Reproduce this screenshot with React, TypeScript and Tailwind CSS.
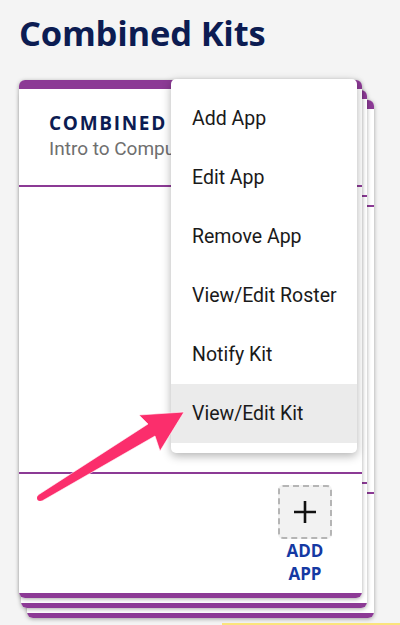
import React from "react";

function BackCard({ cls }: { cls: string }) {
  return (
    <div className={`absolute h-[518px] flex flex-col bg-white rounded-[6px] shadow-[0_1px_4px_rgba(0,0,0,0.35)] overflow-hidden ${cls}`}>
      <div className="h-[9px] bg-[#8c3a95]" />
      <div className="h-[96px]" />
      <div className="h-[2px] bg-[#8c3a95]" />
      <div className="h-[285px]" />
      <div className="h-[2px] bg-[#8c3a95]" />
      <div className="flex-1" />
      <div className="h-[5px] bg-[#8c3a95]" />
    </div>
  );
}

const items = ["Add App", "Edit App", "Remove App", "View/Edit Roster", "Notify Kit", "View/Edit Kit"];

export default function App() {
  return (
    <div className="relative w-[400px] h-[625px] overflow-hidden bg-[#f4f4f4]" style={{ fontFamily: "Roboto, 'Open Sans', sans-serif" }}>
      <h1 className="pl-[19px] pt-[12px] h-[80px] text-[34.5px] leading-[42px] font-bold text-[#0c1c52] tracking-[-0.2px]" style={{ fontFamily: "'Open Sans', sans-serif" }}>
        Combined Kits
      </h1>
      <div className="relative ml-[19px] w-[343px] h-[518px]">
        <BackCard cls="left-[8px] top-[20px] w-[347px]" />
        <BackCard cls="left-[2px] top-[10px] w-[346px]" />
        <div className="relative h-[518px] flex flex-col bg-white rounded-[6px] shadow-[0_1px_4px_rgba(0,0,0,0.35)] overflow-hidden">
          <div className="h-[9px] bg-[#8c3a95]" />
          <div className="h-[96px] pl-[30px] pt-[22px]">
            <div className="text-[19px] leading-[24px] font-bold tracking-[1.7px] text-[#0c1c52]" style={{ fontFamily: "'Open Sans', sans-serif" }}>
              COMBINED
            </div>
            <div className="mt-[1px] text-[19px] leading-[26px] text-[#6f6f6f]">Intro to Computer Science</div>
          </div>
          <div className="h-[2px] bg-[#8c3a95]" />
          <div className="h-[285px]" />
          <div className="h-[2px] bg-[#8c3a95]" />
          <div className="flex-1 flex justify-end pr-[29px] pt-[11px]">
            <div className="flex flex-col items-center w-[56px]">
              <div className="w-[54px] h-[54px] rounded-[5px] border-2 border-dashed border-[#b5b5b5] bg-[#f2f2f2] flex items-center justify-center">
                <svg width="24" height="24" viewBox="0 0 24 24">
                  <path d="M12 1v22M1 12h22" stroke="#111" strokeWidth="2.6" />
                </svg>
              </div>
              <div className="mt-[0px] text-[17px] leading-[23px] font-bold text-[#1539a3] text-center" style={{ fontFamily: "'Open Sans', sans-serif" }}>
                ADD
                <br />
                APP
              </div>
            </div>
          </div>
          <div className="h-[5px] bg-[#8c3a95]" />
        </div>
        <div className="absolute left-[152px] top-[-1px] w-[186px] h-[374px] py-[10px] bg-white rounded-[5px] shadow-[0_3px_10px_rgba(0,0,0,0.3)]">
          {items.map((t, i) => (
            <div
              key={t}
              className={`h-[59px] flex items-center pl-[21px] text-[19.5px] text-[#1a1a1a] ${i === 5 ? "bg-[#ebebeb]" : ""}`}
            >
              {t}
            </div>
          ))}
        </div>
      </div>
      <svg className="absolute left-0 top-0 pointer-events-none" width="400" height="625" viewBox="0 0 400 625">
        <polygon
          points="38,495 148,424 139,415 184,412 160,451 155,436 42,501"
          fill="#fb2e6c"
          stroke="#fff"
          strokeOpacity="0.6"
          strokeWidth="1"
          strokeLinejoin="round"
        />
        <circle cx="40" cy="498" r="3" fill="#fb2e6c" />
      </svg>
      <div className="absolute left-[222px] bottom-0 w-[178px] h-[2px] bg-[#fbe47c]" />
    </div>
  );
}
